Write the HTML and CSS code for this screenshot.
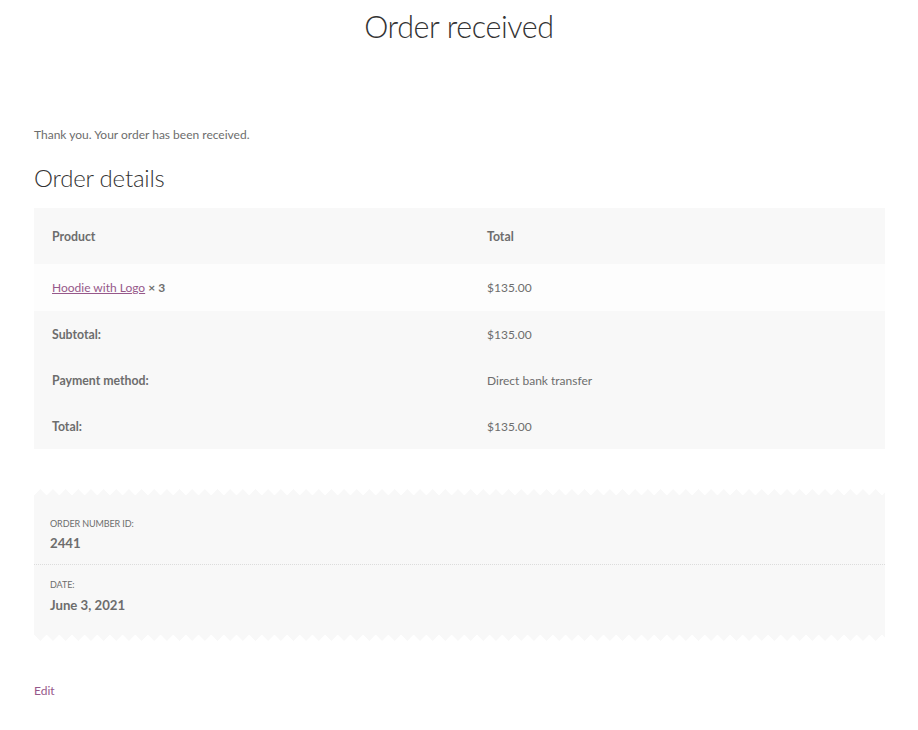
FILE: index.html
```html
<!DOCTYPE html>
<html>
<head>
<meta charset="utf-8">
<title>Order received</title>
<link rel="stylesheet" href="styles.css">
</head>
<body>
<div class="page">
  <h1 class="title">Order received</h1>
  <p class="thanks">Thank you. Your order has been received.</p>
  <h2 class="section-title">Order details</h2>
  <table class="order-table">
    <thead>
      <tr><th class="col-product">Product</th><th>Total</th></tr>
    </thead>
    <tbody>
      <tr class="item"><td><a href="#">Hoodie with Logo</a> <strong>× 3</strong></td><td>$135.00</td></tr>
    </tbody>
    <tfoot>
      <tr><th>Subtotal:</th><td>$135.00</td></tr>
      <tr><th>Payment method:</th><td>Direct bank transfer</td></tr>
      <tr><th>Total:</th><td>$135.00</td></tr>
    </tfoot>
  </table>
  <div class="overview">
    <div class="ov-item first">
      <div class="ov-label">Order number ID:</div>
      <div class="ov-value">2441</div>
    </div>
    <div class="ov-item second">
      <div class="ov-label">Date:</div>
      <div class="ov-value">June 3, 2021</div>
    </div>
  </div>
  <a class="edit" href="#">Edit</a>
</div>
</body>
</html>
```
FILE: styles.css
```css
html, body {
  margin: 0;
  padding: 0;
  background: #fff;
}
body {
  font-family: Lato, "Liberation Sans", sans-serif;
  color: #6d6d6d;
}
.page {
  width: 851px;
  margin-left: 34px;
  padding-top: 8px;
}
.title {
  margin: 0 0 0 -34px;
  width: 918px;
  text-align: center;
  font-weight: 300;
  font-size: 30.5px;
  line-height: 36px;
  color: #333;
  letter-spacing: -0.4px;
}
.thanks {
  margin: 83px 0 0;
  font-size: 12px;
  line-height: 16px;
}
.section-title {
  margin: 19px 0 0;
  font-weight: 300;
  font-size: 24px;
  line-height: 32px;
  color: #333;
  letter-spacing: -0.2px;
}
.order-table {
  margin-top: 14px;
  width: 851px;
  border-collapse: collapse;
  font-size: 12px;
}
.order-table th,
.order-table td {
  text-align: left;
  padding: 0 18px;
  height: 46px;
  font-weight: normal;
}
.order-table th {
  font-weight: 700;
  font-size: 12.3px;
}
.order-table thead th {
  height: 56px;
  background: #f8f8f8;
}
.col-product {
  width: 399px;
}
.order-table tbody td {
  background: #fdfdfd;
  height: 47px;
}
.order-table tfoot th,
.order-table tfoot td {
  background: #f8f8f8;
}
.order-table a {
  color: #96588a;
  text-decoration: underline;
}
.order-table strong {
  font-weight: 700;
}
.overview {
  position: relative;
  background: #f8f8f8;
  padding: 22px 16px 20px;
  margin-bottom: 6px;
  margin-top: 46px;
}
.overview::before,
.overview::after {
  content: "";
  position: absolute;
  left: 0;
  right: 0;
  height: 6.33px;
  background-size: 12.67px 6.33px;
  background-repeat: repeat-x;
}
.overview::before {
  top: -6.33px;
  background-image: conic-gradient(from 135deg at 50% 0%, #f8f8f8 90deg, transparent 90deg);
}
.overview::after {
  bottom: -6.33px;
  background-image: conic-gradient(from -45deg at 50% 100%, #f8f8f8 90deg, transparent 90deg);
}
.ov-item.first {
  padding: 0 16px 11px;
  border-bottom: 1px dotted #dcdcdc;
  margin: 0 -16px;
}
.ov-item.second {
  padding-top: 13px;
}
.ov-label {
  text-transform: uppercase;
  font-size: 9px;
  line-height: 14px;
  letter-spacing: -0.1px;
}
.ov-value {
  font-weight: 700;
  font-size: 13.2px;
  line-height: 20px;
  margin-top: 2px;
}
.ov-item.second .ov-value {
  margin-top: 3px;
}
.edit {
  display: inline-block;
  margin-top: 42px;
  color: #96588a;
  text-decoration: none;
  font-size: 12px;
}
```
